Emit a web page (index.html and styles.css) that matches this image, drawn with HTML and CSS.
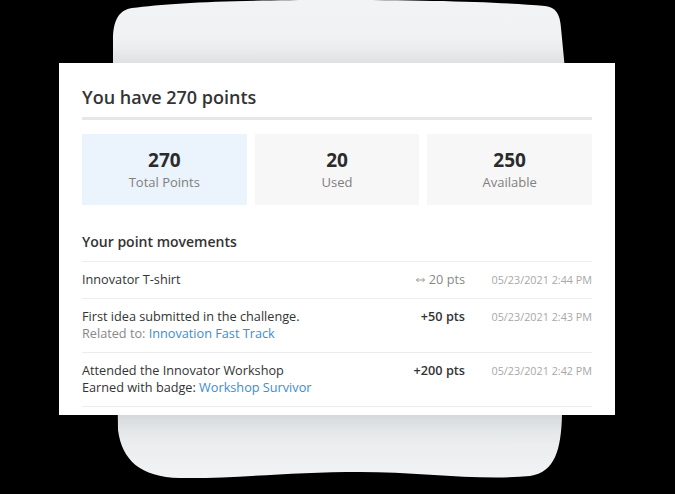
FILE: index.html
```html
<!DOCTYPE html>
<html lang="en">

<head>
  <meta charset="utf-8" />
  <title>Points</title>
  <link rel="stylesheet" href="styles.css">
</head>

<body>
  <div class="stage">
    <svg class="blob" width="675" height="494" viewBox="0 0 675 494">
      <defs>
        <linearGradient id="blobfill" x1="0" y1="0" x2="0" y2="1">
          <stop offset="0" stop-color="#f1f3f4" />
          <stop offset="0.85" stop-color="#e4e7e9" />
          <stop offset="1" stop-color="#f1f3f4" />
        </linearGradient>
      </defs>
      <path fill="url(#blobfill)" d="M113,40 C113,22 118,10 132,8 C170,3 230,0 330,0 C430,0 500,2 545,6 C556,7 560,14 561,28 L566,80 L562,415 C561,450 555,472 530,476 C480,481 420,472 360,472 C290,472 230,479 180,478 C140,477 122,460 118,430 L113,80 Z" />
    </svg>

    <section class="card">
      <h1 class="card-title">You have 270 points</h1>

      <div class="stats">
        <div class="stat stat-total">
          <div class="stat-value">270</div>
          <div class="stat-label">Total Points</div>
        </div>
        <div class="stat">
          <div class="stat-value">20</div>
          <div class="stat-label">Used</div>
        </div>
        <div class="stat">
          <div class="stat-value">250</div>
          <div class="stat-label">Available</div>
        </div>
      </div>

      <h2 class="movements-title">Your point movements</h2>

      <ul class="movements">
        <li class="movement">
          <div class="movement-text">Innovator T-shirt</div>
          <div class="movement-pts used">
            <svg class="arrow" width="9" height="6" viewBox="0 0 9 6">
              <path d="M0.5,3 H8.5 M2.5,1 L0.5,3 L2.5,5 M6.5,1 L8.5,3 L6.5,5" fill="none" stroke="#999" stroke-width="1" />
            </svg>
            20 pts
          </div>
          <div class="movement-date">05/23/2021 2:44 PM</div>
        </li>
        <li class="movement">
          <div class="movement-text">
            First idea submitted in the challenge.<br>
            <span class="muted">Related to:</span> <a href="#">Innovation Fast Track</a>
          </div>
          <div class="movement-pts">+50 pts</div>
          <div class="movement-date">05/23/2021 2:43 PM</div>
        </li>
        <li class="movement">
          <div class="movement-text">
            Attended the Innovator Workshop<br>
            Earned with badge: <a href="#">Workshop Survivor</a>
          </div>
          <div class="movement-pts">+200 pts</div>
          <div class="movement-date">05/23/2021 2:42 PM</div>
        </li>
      </ul>
    </section>
  </div>
</body>

</html>
```

FILE: styles.css
```css
html,
body {
  height: 100%;
  margin: 0;
  padding: 0;
  overflow: hidden;
  background: #000;
  font-family: 'Open Sans', 'Liberation Sans', sans-serif;
  color: #333;
}

.stage {
  position: relative;
  width: 675px;
  height: 494px;
  padding: 63px 0 0 59px;
  box-sizing: border-box;
}

.blob {
  position: absolute;
  top: 0;
  left: 0;
}

.card {
  position: relative;
  width: 556px;
  padding: 22px 23px 8px;
  box-sizing: border-box;
  background: #fff;
  box-shadow: 0 0 28px rgba(0, 0, 0, 0.14);
}

.card-title {
  margin: 0;
  padding-bottom: 8px;
  font-size: 18px;
  font-weight: 600;
  line-height: 24px;
  border-bottom: 3px solid #e6e7e8;
}

.stats {
  display: grid;
  grid-template-columns: 1fr 1fr 1fr;
  gap: 8px;
  margin-top: 14px;
}

.stat {
  padding: 14px 0 13px;
  background: #f7f7f7;
  text-align: center;
}

.stat-total {
  background: #ebf4fc;
}

.stat-value {
  font-size: 19px;
  font-weight: 700;
  line-height: 24px;
  color: #2b2b2b;
}

.stat-label {
  font-size: 13px;
  line-height: 20px;
  color: #808080;
}

.movements-title {
  margin: 27px 0 9px 0;
  font-size: 14px;
  font-weight: 600;
  line-height: 20px;
}

.movements {
  margin: 0;
  padding: 0;
  list-style: none;
  border-top: 1px solid #ececec;
}

.movement {
  display: grid;
  grid-template-columns: 1fr auto 101px;
  gap: 26px;
  padding: 9px 0 10px;
  border-bottom: 1px solid #ececec;
  font-size: 12.7px;
  line-height: 17px;
}

.movement-text .muted {
  color: #888;
}

.movement-text a {
  color: #3b8ed0;
  text-decoration: none;
}

.movement-pts {
  font-weight: 600;
  text-align: right;
}

.movement-pts.used {
  font-weight: 400;
  color: #888;
}

.arrow {
  margin-right: 1px;
  vertical-align: 1px;
}

.movement-date {
  font-size: 10.8px;
  color: #a8a8a8;
  text-align: right;
  white-space: nowrap;
}
```
